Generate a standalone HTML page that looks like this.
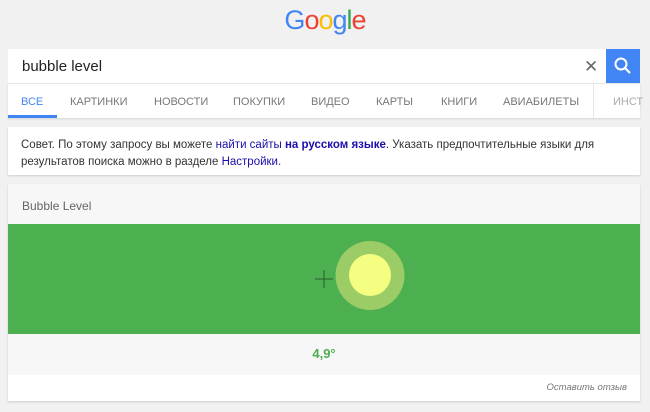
<!DOCTYPE html>
<html><head><meta charset="utf-8"><style>
*{margin:0;padding:0;box-sizing:border-box}
body{width:650px;height:412px;background:#f1f1f1;font-family:"Liberation Sans",Arial,sans-serif;position:relative;overflow:hidden}
.abs{position:absolute}
.logo{left:0;width:650px;top:5px;text-align:center;font-size:27px;letter-spacing:-1px}
.sb{left:8px;top:49px;width:598px;height:34px;background:#fff}
.q{left:22px;top:58px;font-size:15px;color:#222}
.x{left:584px;top:57px;font-size:17px;color:#666}
.btn{left:606px;top:49px;width:34px;height:34px;background:#4285f4}
.tabs{left:8px;top:83px;width:632px;height:35px;background:#fff;border-top:1px solid #e6e6e6;box-shadow:0 1px 2px rgba(0,0,0,.12)}
.tab{position:absolute;top:12px;font-size:11px;color:#777}
.card{background:#fff;box-shadow:0 1px 2px rgba(0,0,0,.15)}
</style></head><body>
<div class="abs logo"><span style="color:#4285f4">G</span><span style="color:#ea4335">o</span><span style="color:#fbbc05">o</span><span style="color:#4285f4">g</span><span style="color:#34a853">l</span><span style="color:#ea4335">e</span></div>
<div class="abs sb"></div>
<div class="abs q">bubble level</div>
<div class="abs x">✕</div>
<div class="abs btn"><svg width="34" height="34"><circle cx="15" cy="15" r="5.5" fill="none" stroke="#fff" stroke-width="2"/><path d="M19 19l5 5" stroke="#fff" stroke-width="2.2"/></svg></div>
<div class="abs tabs">
<span class="tab" style="left:13px;color:#4285f4">ВСЕ</span>
<span class="tab" style="left:62px">КАРТИНКИ</span>
<span class="tab" style="left:146px">НОВОСТИ</span>
<span class="tab" style="left:225px">ПОКУПКИ</span>
<span class="tab" style="left:303px">ВИДЕО</span>
<span class="tab" style="left:368px">КАРТЫ</span>
<span class="tab" style="left:433px">КНИГИ</span>
<span class="tab" style="left:495px">АВИАБИЛЕТЫ</span>
<span class="tab" style="left:605px;color:#aaa">ИНСТ</span>
<div style="position:absolute;left:585px;top:0;width:1px;height:34px;background:#e6e6e6"></div>
<div style="position:absolute;left:0;top:31px;width:49px;height:3px;background:#4285f4"></div>
</div>
<div class="abs card" style="left:8px;top:127px;width:632px;height:48px;padding:10px 13px;font-size:11.5px;line-height:17px;color:#333">Совет. По этому запросу вы можете <span style="color:#1a0dab">найти сайты <b>на русском языке</b></span>. Указать предпочтительные языки для результатов поиска можно в разделе <span style="color:#1a0dab">Настройки</span>.</div>
<div class="abs card" style="left:8px;top:184px;width:632px;height:217px;background:#f7f7f7">
<div style="position:absolute;left:14px;top:15px;font-size:12px;color:#666">Bubble Level</div>
<div style="position:absolute;left:0;top:40px;width:632px;height:110px;background:#4caf50">
<svg width="632" height="110"><circle cx="362" cy="51.5" r="34.5" fill="#9ccc65"/><circle cx="362" cy="51" r="21" fill="#f4ff81"/><path d="M307 55h18M316 46v18" stroke="#2e5d2e" stroke-width="1"/></svg></div>
<div style="position:absolute;left:0;top:162px;width:632px;text-align:center;font-size:13px;font-weight:bold;color:#4caf50">4,9°</div>
<div style="position:absolute;left:0;top:191px;width:632px;height:26px;background:#fff"><span style="position:absolute;right:13px;top:7px;font-size:9.5px;font-style:italic;color:#777">Оставить отзыв</span></div>
</div>
</body></html>
